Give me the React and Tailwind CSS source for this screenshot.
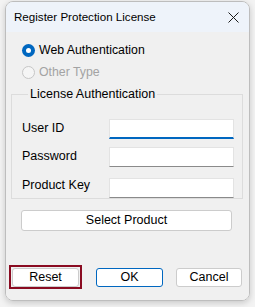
const font = { fontFamily: '"Liberation Sans", Arial, sans-serif' }

function Radio({ checked, disabled, label }) {
  return (
    <div className="flex items-center h-[22px]">
      {checked ? (
        <span className="w-[13px] h-[13px] rounded-full bg-[#0067c0] flex items-center justify-center">
          <span className="w-[5px] h-[5px] rounded-full bg-white" />
        </span>
      ) : (
        <span
          className={`w-[13px] h-[13px] rounded-full border ${
            disabled ? 'border-[#c6c6c6] bg-[#f5f5f5]' : 'border-[#5a5a5a] bg-white'
          }`}
        />
      )}
      <span
        className={`ml-[4px] text-[12.3px] leading-none ${
          disabled ? 'text-[#a3a3a3]' : 'text-black'
        }`}
      >
        {label}
      </span>
    </div>
  )
}

function Field({ label, focused, raised, className = '' }) {
  return (
    <div className={`flex items-center ${className}`}>
      <span
        className={`w-[87px] text-[12.5px] text-black leading-none ${
          raised ? '-mt-[6px]' : '-mt-[1px]'
        }`}
      >
        {label}
      </span>
      <div
        className={`w-[125px] h-[20px] bg-white border border-[#e3e3e3] ${
          focused ? 'border-b-2 border-b-[#0067c0]' : 'border-b-[#8a8a8a]'
        }`}
      />
    </div>
  )
}

function Button({ children, primary, className = '' }) {
  return (
    <button
      className={`h-[19px] bg-white rounded-[3px] border text-[12.5px] leading-none text-black ${
        primary ? 'border-[#0067c0]' : 'border-[#cccccc]'
      } ${className}`}
      style={font}
    >
      {children}
    </button>
  )
}

export default function App() {
  return (
    <div className="w-[255px] h-[307px] bg-[#f3f3f3] pl-[5px] pt-[1px]" style={font}>
      <div className="w-[245px] h-[300px] rounded-[8px] border border-[#bdbdbd] overflow-hidden shadow-[0_2px_6px_rgba(0,0,0,0.18)] flex flex-col">
        <div className="h-[30px] bg-[#eef3fa] flex items-center justify-between pl-[8px] pr-[10px]">
          <span className="text-[11.6px] text-black">Register Protection License</span>
          <svg width="11" height="11" viewBox="0 0 11 11">
            <path d="M0.5 0.5 L10.5 10.5 M10.5 0.5 L0.5 10.5" stroke="#1a1a1a" strokeWidth="1" />
          </svg>
        </div>

        <div className="flex-1 bg-[#f0f0f0] pt-[7px]">
          <div className="pl-[16px]">
            <Radio checked label="Web Authentication" />
            <Radio disabled label="Other Type" />
          </div>

          <fieldset className="ml-[5px] mt-[3px] w-[232px] h-[113px] border border-[#dcdcdc] pl-[10px]">
            <legend className="ml-[6px] px-[2px] text-[12.5px] leading-[16px] text-black">
              License Authentication
            </legend>
            <Field label="User ID" focused className="mt-[17px]" />
            <Field label="Password" className="mt-[8px]" />
            <Field label="Product Key" raised className="mt-[11px]" />
          </fieldset>

          <div className="pl-[15px] mt-[8px]">
            <Button className="w-[211px] h-[21px]">Select Product</Button>
          </div>

          <div className="flex items-center mt-[34px] pl-[3px]">
            <div className="w-[73px] h-[24px] border-2 border-[#8a0b21] flex items-center justify-center">
              <Button className="w-[67px]">Reset</Button>
            </div>
            <Button primary className="w-[67px] ml-[14px]">OK</Button>
            <Button className="w-[66px] ml-[13px]">Cancel</Button>
          </div>
        </div>
      </div>
    </div>
  )
}
